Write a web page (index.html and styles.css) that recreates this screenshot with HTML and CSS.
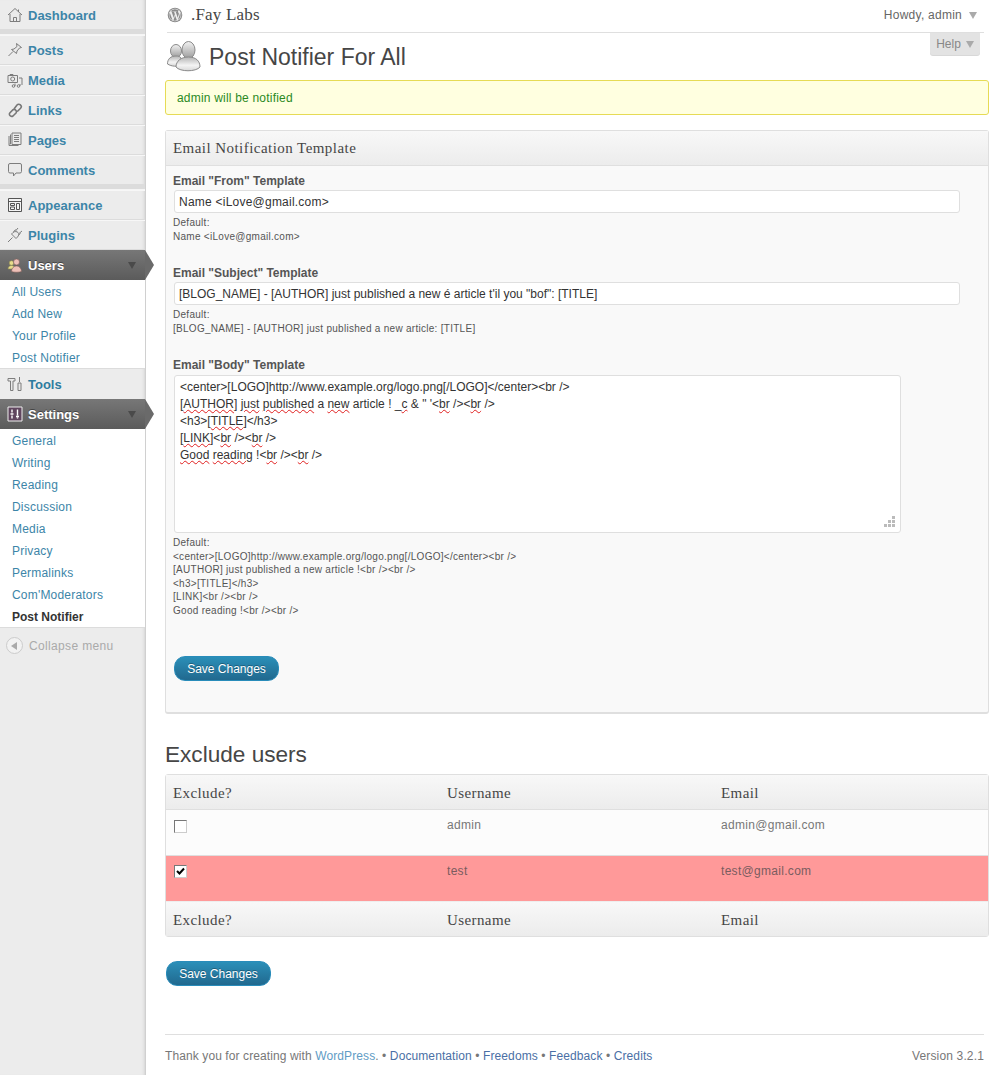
FILE: index.html
```html
<!DOCTYPE html>
<html lang="en">
<head>
<meta charset="UTF-8" />
<title>Post Notifier For All</title>
<link rel="stylesheet" href="styles.css">
</head>
<body>

<nav class="sidebar">
  <a class="nav-item first" href="#"><svg class="icon" viewBox="0 0 16 16"><path class="line" d="M1 8 8 1.500 15 8M3 7v7.500h10V7M6.500 14.500v-4h3v4M11.500 2.500v2.500"/></svg>Dashboard</a>
  <div class="nav-sep"></div>
  <a class="nav-item" href="#"><svg class="icon" viewBox="0 0 16 16"><path class="line" d="M9.500 1.500l5 4-2 .5-2.500 3-.5 2.500-5-4 2.500-.5 3-2.500zM6 9.500l-4.500 4.500"/></svg>Posts</a>
  <a class="nav-item" href="#"><svg class="icon" viewBox="0 0 16 16"><path class="line" d="M1 3.500h9.500v7H1zM3 3.500v-1h3v1M12 6h3v7M8 11.500v2.500M13 12v2"/><circle class="line" cx="5.700" cy="7" r="2"/><circle class="line" cx="6.500" cy="14" r="1.300"/><circle class="line" cx="11.500" cy="14" r="1.300"/></svg>Media</a>
  <a class="nav-item" href="#"><svg class="icon" viewBox="0 0 16 16"><path class="thick" d="M2.500 11.500a2.300 2.300 0 0 0 3.500 2.500l3-3a2.300 2.300 0 0 0-3-3.300l-3 3a2.300 2.300 0 0 0-.5.800zM7 7l3-4a2.400 2.400 0 0 1 3.600 3.200l-3.300 3.300"/></svg>Links</a>
  <a class="nav-item" href="#"><svg class="icon" viewBox="0 0 16 16"><path class="line" d="M2 4v9.500h9.500M3.500 2.500v9.500h-1M5 1h9v11.500H5zM7 3.500h5M7 5.500h5M7 7.500h5M7 9.500h5"/></svg>Pages</a>
  <a class="nav-item" href="#"><svg class="icon" viewBox="0 0 16 16"><path class="line" d="M3 1.500h10a1.500 1.500 0 0 1 1.500 1.500v6.500a1.500 1.500 0 0 1-1.500 1.500H9L6.500 14v-3H3a1.500 1.500 0 0 1-1.500-1.500V3A1.500 1.500 0 0 1 3 1.500z"/></svg>Comments</a>
  <div class="nav-sep"></div>
  <a class="nav-item" href="#"><svg class="icon" viewBox="0 0 16 16"><path class="line dark" d="M1.500 1.500h13v13h-13zM1.500 4.500h13M3.500 6.500h4v2h-4zM3.500 10h4v2.500h-4zM9.500 6.500h3v6h-3z"/></svg>Appearance</a>
  <a class="nav-item" href="#"><svg class="icon" viewBox="0 0 16 16"><path class="line" d="M4.500 7l4.500 4.500 1.500-1.500c1.500-1.500 1.500-3.500.5-4.500S8 4 6 5.500zM1 15l4.500-4.500M8.500 2.500l-2 2.500M13.500 6.500l-2.500 2M11 1l-2.500 3M15 4l-3 2.500"/></svg>Plugins</a>

  <a class="nav-item current" href="#"><svg class="icon" viewBox="0 0 16 16"><circle class="yellow" cx="4.500" cy="6" r="2.300"/><path class="yellow" d="M1 12c0-2.500 2-3.500 3.500-3.500S8 9.500 8 12z"/><circle class="pink" cx="9.500" cy="5" r="3"/><path class="pink" d="M4.500 14.500c0-3.500 2.500-5.500 5-5.500s5 2 5 5.500c-2 1-8 1-10 0z"/></svg>Users<span class="arrow"></span></a>
  <ul class="submenu">
    <li><a href="#">All Users</a></li>
    <li><a href="#">Add New</a></li>
    <li><a href="#">Your Profile</a></li>
    <li><a href="#">Post Notifier</a></li>
  </ul>

  <a class="nav-item tools" href="#"><svg class="icon" viewBox="0 0 16 16"><path class="line" d="M1 2.500h7v2.500H6v9.500H3.500V5H1zM12.500 1v5M11 7h3v7.500h-3z"/></svg>Tools</a>

  <a class="nav-item current" href="#"><svg class="icon" viewBox="0 0 16 16"><path class="settings" d="M1 1h14v14H1z"/><path class="settings-line" d="M5 3.500v3M5 9.500v3M3.500 8h3M10.500 3.500v6M10.500 11.500v1M9 10.500h3"/></svg>Settings<span class="arrow"></span></a>
  <ul class="submenu">
    <li><a href="#">General</a></li>
    <li><a href="#">Writing</a></li>
    <li><a href="#">Reading</a></li>
    <li><a href="#">Discussion</a></li>
    <li><a href="#">Media</a></li>
    <li><a href="#">Privacy</a></li>
    <li><a href="#">Permalinks</a></li>
    <li><a href="#">Com'Moderators</a></li>
    <li><a class="active" href="#">Post Notifier</a></li>
  </ul>

  <div class="collapse"><span class="collapse-btn"><span class="collapse-tri"></span></span>Collapse menu</div>
</nav>

<div class="main">
  <header class="topbar">
    <div class="site">
      <svg class="wp-logo" viewBox="0 0 16 16"><circle cx="8" cy="8" r="7.300" fill="#8c8c8c"/><circle cx="8" cy="8" r="6.200" fill="#eee"/><path fill="#8c8c8c" d="M2.300 8a5.700 5.700 0 0 0 3.200 5.100L2.800 5.700A5.700 5.700 0 0 0 2.300 8zM12.100 7.700c0-.7-.3-1.200-.5-1.600-.3-.5-.6-.9-.6-1.300 0-.5.400-1 .9-1h.1A5.700 5.700 0 0 0 3.400 4.500h.4c.6 0 1.500-.1 1.500-.1.300 0 .3.400 0 .5 0 0-.3 0-.6 0l2 5.800 1.200-3.500-.8-2.300c-.3 0-.6 0-.6 0-.3 0-.3-.5 0-.5 0 0 .9.100 1.400.1.600 0 1.500-.1 1.500-.1.300 0 .3.400 0 .5 0 0-.3 0-.6 0l1.900 5.800.5-1.800c.3-.7.500-1.300.5-1.800zM8.100 8.500l-1.700 4.900a5.700 5.700 0 0 0 3.500-.1zM13 5.300c0 .2 0 .4 0 .6 0 .6-.1 1.200-.4 2l-1.700 5a5.700 5.700 0 0 0 2.100-7.600z"/></svg>
      <span class="site-name">.Fay Labs</span>
    </div>
    <div class="howdy">Howdy, admin<span class="tri"></span></div>
  </header>
  <div class="help-row"><div class="help-tab">Help<span class="tri"></span></div></div>

  <div class="title-row">
    <svg class="page-icon" viewBox="0 0 34 34">
      <defs>
        <linearGradient id="headShade" x1="0" y1="0" x2="0" y2="1"><stop offset="0" stop-color="#f2f2f2"/><stop offset="1" stop-color="#9c9c9c"/></linearGradient>
        <linearGradient id="bodyShade" x1="0" y1="0" x2="0" y2="1"><stop offset="0" stop-color="#b4b4b4"/><stop offset=".6" stop-color="#f4f4f4"/><stop offset="1" stop-color="#d8d8d8"/></linearGradient>
      </defs>
      <ellipse cx="9.500" cy="11" rx="5.500" ry="6.500" fill="url(#headShade)" stroke="#8a8a8a"/>
      <path d="M1 24c0-5 3-8 8.500-8S15 18 15 25c-4 2-10 1.500-14-1z" fill="url(#bodyShade)" stroke="#8a8a8a"/>
      <ellipse cx="22" cy="10" rx="6.500" ry="8.500" fill="url(#headShade)" stroke="#8a8a8a"/>
      <path d="M9.500 27c0-6 5-10 12.500-10s11.500 4 11.500 10c-4 5-20 5-24 0z" fill="url(#bodyShade)" stroke="#8a8a8a"/>
    </svg>
    <h1>Post Notifier For All</h1>
  </div>

  <div class="notice">admin will be notified</div>

  <section class="postbox">
    <h3 class="postbox-head">Email Notification Template</h3>
    <div class="postbox-body">
      <div class="field">
        <label for="fromField">Email "From" Template</label>
        <input type="text" id="fromField" value="Name <iLove@gmail.com>" />
        <p class="default">Default:<br />Name &lt;iLove@gmail.com&gt;</p>
      </div>
      <div class="field">
        <label for="subjectField">Email "Subject" Template</label>
        <input type="text" id="subjectField" value='[BLOG_NAME] - [AUTHOR] just published a new é article t&apos;il you "bof": [TITLE]' />
        <p class="default">Default:<br />[BLOG_NAME] - [AUTHOR] just published a new article: [TITLE]</p>
      </div>
      <div class="field">
        <label class="body-label">Email "Body" Template</label>
        <div class="textarea">
          &lt;center&gt;[LOGO]http://www.example.org/logo.png[/LOGO]&lt;/center&gt;&lt;br /&gt;<br />
          [<u>AUTHOR</u>] <u>just</u> <u>published</u> a <u>new</u> article ! _<u>c</u> &amp; " '&lt;<u>br</u> /&gt;&lt;<u>br</u> /&gt;<br />
          &lt;h3&gt;[<u>TITLE</u>]&lt;/h3&gt;<br />
          [<u>LINK</u>]&lt;<u>br</u> /&gt;&lt;<u>br</u> /&gt;<br />
          <u>Good</u> <u>reading</u> !&lt;<u>br</u> /&gt;&lt;<u>br</u> /&gt;
          <svg class="grip" viewBox="0 0 11 11"><path fill="#bbb" d="M8 0h3v3H8zM4 4h3v3H4zM8 4h3v3H8zM0 8h3v3H0zM4 8h3v3H4zM8 8h3v3H8z"/></svg>
        </div>
        <p class="default">Default:<br />&lt;center&gt;[LOGO]http://www.example.org/logo.png[/LOGO]&lt;/center&gt;&lt;br /&gt;<br />[AUTHOR] just published a new article !&lt;br /&gt;&lt;br /&gt;<br />&lt;h3&gt;[TITLE]&lt;/h3&gt;<br />[LINK]&lt;br /&gt;&lt;br /&gt;<br />Good reading !&lt;br /&gt;&lt;br /&gt;</p>
      </div>
      <button class="save save-inner">Save Changes</button>
    </div>
  </section>

  <h2>Exclude users</h2>
  <table class="users">
    <thead>
      <tr><th>Exclude?</th><th>Username</th><th>Email</th></tr>
    </thead>
    <tbody>
      <tr>
        <td><span class="check"></span></td>
        <td>admin</td>
        <td>admin@gmail.com</td>
      </tr>
      <tr class="excluded">
        <td><span class="check on"><svg viewBox="0 0 9 9"><path fill="none" stroke="#000" stroke-width="2" d="M1 4l2.500 2.500L8 1.500"/></svg></span></td>
        <td>test</td>
        <td>test@gmail.com</td>
      </tr>
    </tbody>
    <tfoot>
      <tr><th>Exclude?</th><th>Username</th><th>Email</th></tr>
    </tfoot>
  </table>

  <button class="save save-outer">Save Changes</button>

  <footer class="footer">
    <span class="thanks">Thank you for creating with <a class="wp" href="#">WordPress</a>. • <a href="#">Documentation</a> • <a href="#">Freedoms</a> • <a href="#">Feedback</a> • <a href="#">Credits</a></span>
    <span class="version">Version 3.2.1</span>
  </footer>
</div>

</body>
</html>
```

FILE: styles.css
```css
* {
  box-sizing: border-box;
}
body {
  margin: 0;
  display: flex;
  min-height: 1075px;
  background: #fff;
  font-family: "Liberation Sans", Arial, sans-serif;
  font-size: 12px;
  color: #333;
}
a {
  text-decoration: none;
  color: #21759b;
}

/* sidebar */
.sidebar {
  width: 146px;
  flex: none;
  background: #ececec;
  border-right: 1px solid #d0d0d0;
  box-shadow: inset -3px 0 3px -2px #d4d4d4;
}
.nav-item {
  position: relative;
  display: flex;
  align-items: center;
  height: 30px;
  padding-left: 7px;
  font-size: 13px;
  font-weight: bold;
  color: #3c85a8;
  border-top: 1px solid #f7f7f7;
  border-bottom: 1px solid #dcdcdc;
}
.nav-item.first {
  padding-top: 1px;
  border-top: 0;
}
.nav-sep {
  height: 5px;
  background: #dcdcdc;
  border-bottom: 1px solid #f5f5f5;
}
.icon {
  width: 16px;
  height: 16px;
  margin-right: 5px;
  flex: none;
}
.line {
  fill: #eaeaea;
  stroke: #7d7d7d;
  stroke-width: 1;
}
.line.dark {
  stroke: #555;
  fill: #f4f4f4;
}
.thick {
  fill: none;
  stroke: #777;
  stroke-width: 1.600;
}
.yellow {
  fill: #e6dc8c;
  stroke: #8f8a50;
  stroke-width: .6;
}
.pink {
  fill: #eec0b8;
  stroke: #7a5a55;
  stroke-width: .6;
}
.settings {
  fill: #60465f;
  stroke: #eee;
  stroke-width: 1;
}
.settings-line {
  fill: none;
  stroke: #fff;
  stroke-width: 1.400;
}
.nav-item.current {
  height: 30px;
  background: linear-gradient(#777, #5b5b5b);
  border: 0;
  color: #fff;
  text-shadow: 0 -1px 0 #444;
}
.nav-item.current::after {
  content: "";
  position: absolute;
  left: 145px;
  top: 0;
  border-left: 9px solid #6a6a6a;
  border-top: 15px solid transparent;
  border-bottom: 15px solid transparent;
  width: 0;
  height: 0;
  z-index: 2;
}
.arrow {
  position: absolute;
  left: 128px;
  top: 12px;
  border-top: 7px solid #4a4a4a;
  border-left: 4px solid transparent;
  border-right: 4px solid transparent;
}
.submenu {
  list-style: none;
  margin: 0;
  padding: 0;
  background: #fff;
}
.submenu li {
  height: 22px;
  line-height: 24px;
  padding-left: 12px;
}
.submenu a {
  color: #3c85a8;
  letter-spacing: .2px;
}
.submenu a.active {
  color: #333;
  font-weight: bold;
  letter-spacing: 0;
}
.tools {
  border-top: 1px solid #dcdcdc;
  border-bottom: 0;
  height: 31px;
  color: #2e7c9f;
}
.collapse {
  display: flex;
  align-items: center;
  height: 36px;
  padding-left: 6px;
  letter-spacing: .35px;
  color: #aaa;
  border-top: 1px solid #dcdcdc;
}
.collapse-btn {
  display: flex;
  align-items: center;
  justify-content: center;
  width: 17px;
  height: 17px;
  margin-right: 6px;
  border: 1px solid #ccc;
  border-radius: 50%;
  background: #f2f2f2;
}
.collapse-tri {
  margin-left: -2px;
  border-right: 6px solid #aaa;
  border-top: 4px solid transparent;
  border-bottom: 4px solid transparent;
}

/* main column */
.main {
  width: 824px;
  margin-left: 19px;
  flex: none;
}
.topbar {
  display: flex;
  justify-content: space-between;
  align-items: center;
  height: 33px;
  margin: 0 5px 0 2px;
  padding-bottom: 3px;
  border-bottom: 1px solid #dfdfdf;
}
.site {
  display: flex;
  align-items: center;
}
.wp-logo {
  width: 16px;
  height: 16px;
  margin-right: 8px;
}
.site-name {
  padding-top: 1px;
  font-family: "Liberation Serif", Georgia, serif;
  font-size: 17px;
  letter-spacing: .2px;
  color: #464646;
}
.howdy {
  letter-spacing: .25px;
  color: #666;
  padding-right: 7px;
}
.tri {
  display: inline-block;
  margin-left: 7px;
  border-top: 7px solid #aaa;
  border-left: 4px solid transparent;
  border-right: 4px solid transparent;
}
.help-row {
  display: flex;
  justify-content: flex-end;
  height: 0;
  margin-right: 9px;
}
.help-tab {
  width: 50px;
  height: 22px;
  line-height: 23px;
  text-align: center;
  color: #888;
  background: #e3e3e3;
  border-radius: 0 0 3px 3px;
  box-shadow: 0 1px 0 #d8d8d8;
}
.help-tab .tri {
  margin-left: 5px;
}
.title-row {
  display: flex;
  align-items: center;
  height: 47px;
  padding-left: 1px;
}
.page-icon {
  width: 35px;
  height: 34px;
  margin-right: 8px;
}
h1 {
  margin: 0;
  padding-top: 2px;
  font-size: 23px;
  font-weight: normal;
  color: #464646;
}
.notice {
  height: 35px;
  line-height: 34px;
  padding-left: 11px;
  letter-spacing: .2px;
  background: #ffffe0;
  border: 1px solid #e6db55;
  border-radius: 3px;
  color: #2b8a1f;
}

/* template box */
.postbox {
  height: 584px;
  margin-top: 15px;
  background: #f9f9f9;
  border: 1px solid #dfdfdf;
  border-bottom-width: 2px;
  border-radius: 3px;
}
.postbox-head {
  margin: 0;
  height: 35px;
  line-height: 35px;
  padding-left: 7px;
  font-family: "Liberation Serif", Georgia, serif;
  font-size: 15px;
  letter-spacing: .45px;
  font-weight: normal;
  color: #464646;
  background: linear-gradient(#f8f8f8, #ececec);
  border-bottom: 1px solid #dfdfdf;
}
.postbox-body {
  padding: 8px 7px 0;
}
.field {
  height: 92px;
}
.field label {
  display: block;
  height: 16px;
  line-height: 15px;
  font-weight: bold;
  color: #555;
}
.field .body-label {
  height: 17px;
}
.field input {
  display: block;
  width: 786px;
  height: 23px;
  margin-left: 1px;
  padding: 0 4px;
  font: 12px "Liberation Sans", Arial, sans-serif;
  color: #333;
  background: #fff;
  border: 1px solid #dfdfdf;
  border-radius: 3px;
}
#fromField {
  letter-spacing: .23px;
}
.default {
  margin: 3px 0 0;
  font-size: 10px;
  letter-spacing: .28px;
  line-height: 13.500px;
  color: #555;
}
.textarea {
  position: relative;
  width: 727px;
  height: 158px;
  margin-left: 1px;
  padding: 3px 5px;
  line-height: 17px;
  color: #333;
  background: #fff;
  border: 1px solid #dfdfdf;
  border-radius: 3px;
}
.textarea u {
  text-decoration: underline wavy #e02020 1px;
  text-underline-offset: 1px;
}
.grip {
  position: absolute;
  right: 5px;
  bottom: 5px;
  width: 11px;
  height: 11px;
}
.save {
  display: block;
  width: 105px;
  height: 25px;
  padding: 0;
  font: 12px "Liberation Sans", Arial, sans-serif;
  color: #fff;
  text-shadow: 0 -1px 0 rgba(0,0,0,0.3);
  background: linear-gradient(#2b8fb8, #21698f);
  border: 1px solid #298cba;
  border-radius: 11px;
}
.save-inner {
  margin: 206px 0 0 1px;
}

/* users table */
h2 {
  margin: 28px 0 0;
  height: 32px;
  line-height: 26px;
  font-size: 22.600px;
  font-weight: normal;
  color: #464646;
}
.users {
  width: 824px;
  table-layout: fixed;
  border-collapse: separate;
  border-spacing: 0;
  background: #fcfcfc;
  border: 1px solid #dfdfdf;
  border-radius: 3px;
}
.users th {
  height: 35px;
  padding: 2px 7px 0;
  text-align: left;
  font-family: "Liberation Serif", Georgia, serif;
  font-size: 15px;
  letter-spacing: .4px;
  font-weight: normal;
  color: #464646;
  background: linear-gradient(#f8f8f8, #ececec);
}
.users thead th {
  border-bottom: 1px solid #dfdfdf;
}
.users tfoot th {
  height: 34px;
}
.users td {
  height: 46px;
  padding: 8px 7px 0;
  vertical-align: top;
  letter-spacing: .3px;
  color: #777;
  border-bottom: 1px solid #dfdfdf;
}
.users tbody tr:last-child td {
  border-bottom: 1px solid #eee;
}
.excluded td {
  background: #ff9999;
  color: #7a5c5f;
}
.check {
  display: block;
  width: 13px;
  height: 13px;
  margin: 2px 0 0 1px;
  background: #fff;
  border: 1px solid #777;
  border-right-color: #ccc;
  border-bottom-color: #ccc;
}
.check.on {
  margin-top: 1px;
  padding: 1px;
}
.check svg {
  display: block;
  width: 9px;
  height: 9px;
}
.save-outer {
  margin: 24px 0 0 1px;
}

/* footer */
.footer {
  display: flex;
  justify-content: space-between;
  width: 819px;
  margin-top: 48px;
  padding-top: 14px;
  border-top: 1px solid #dfdfdf;
  color: #777;
}
.thanks {
  letter-spacing: .1px;
}
.version {
  letter-spacing: .15px;
}
.footer a {
  color: #4a6fa5;
}
.footer a.wp {
  color: #5f9cc5;
}
```
